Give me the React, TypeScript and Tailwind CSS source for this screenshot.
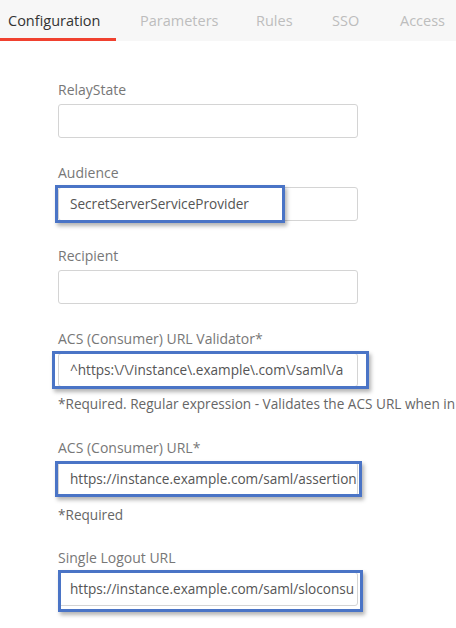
import React from 'react';

type Mark = { l: number; t: number; w: number; h: number };

type FieldProps = {
  label: string;
  value?: string;
  mark?: Mark;
  help?: string;
  helpGap?: string;
  className?: string;
};

const Field: React.FC<FieldProps> = ({ label, value, mark, help, helpGap = 'mt-[9px]', className }) => (
  <div className={className}>
    <div className="h-4 leading-4 text-[14px] text-[#777]">{label}</div>
    <div className="relative mt-[6px] w-[300px]">
      <div className="h-[34px] w-[300px] overflow-hidden whitespace-nowrap rounded-[3px] border border-[#d4d4d4] bg-white pl-[11px] text-[13.6px] leading-[32px] text-[#555]">
        {value}
      </div>
      {mark && (
        <div
          className="pointer-events-none absolute border-[3px] border-[#4a74c6] shadow-[2px_3px_4px_rgba(0,0,0,0.3)]"
          style={{ left: mark.l, top: mark.t, width: mark.w, height: mark.h }}
        />
      )}
    </div>
    {help && <div className={`${helpGap} h-4 whitespace-nowrap leading-4 text-[13.6px] text-[#666]`}>{help}</div>}
  </div>
);

export default function App() {
  return (
    <div className="h-[628px] w-[456px] overflow-hidden bg-white font-['Open_Sans',sans-serif]">
      <div className="flex h-[41px] bg-[#f7f7f7] text-[14.5px]">
        <div className="flex w-[116px] items-center border-b-[3px] border-[#f0412f] pl-[8px] pt-[3px] text-[#333]">
          Configuration
        </div>
        <div className="flex w-[140px] items-center pl-[24px] text-[#bdbdbd]">Parameters</div>
        <div className="flex w-[76px] items-center text-[#bdbdbd]">Rules</div>
        <div className="flex w-[68px] items-center text-[#bdbdbd]">SSO</div>
        <div className="flex items-center text-[#bdbdbd]">Access</div>
      </div>

      <div className="pl-[58px] pt-[41px]">
        <Field label="RelayState" />
        <Field
          className="mt-[27px]"
          label="Audience"
          value="SecretServerServiceProvider"
          mark={{ l: -3, t: -2, w: 230, h: 38 }}
        />
        <Field className="mt-[27px]" label="Recipient" />
        <Field
          className="mt-[27px]"
          label="ACS (Consumer) URL Validator*"
          value="^https:\/\/instance\.example\.com\/saml\/a"
          mark={{ l: -6, t: -2, w: 317, h: 38 }}
          help="*Required. Regular expression - Validates the ACS URL when in"
        />
        <Field
          className="mt-[28px]"
          label="ACS (Consumer) URL*"
          value="https://instance.example.com/saml/assertion"
          mark={{ l: -3, t: -1, w: 307, h: 36 }}
          help="*Required"
          helpGap="mt-[11px]"
        />
        <Field
          className="mt-[27px]"
          label="Single Logout URL"
          value="https://instance.example.com/saml/sloconsu"
          mark={{ l: 0, t: -2, w: 305, h: 42 }}
        />
      </div>
    </div>
  );
}
